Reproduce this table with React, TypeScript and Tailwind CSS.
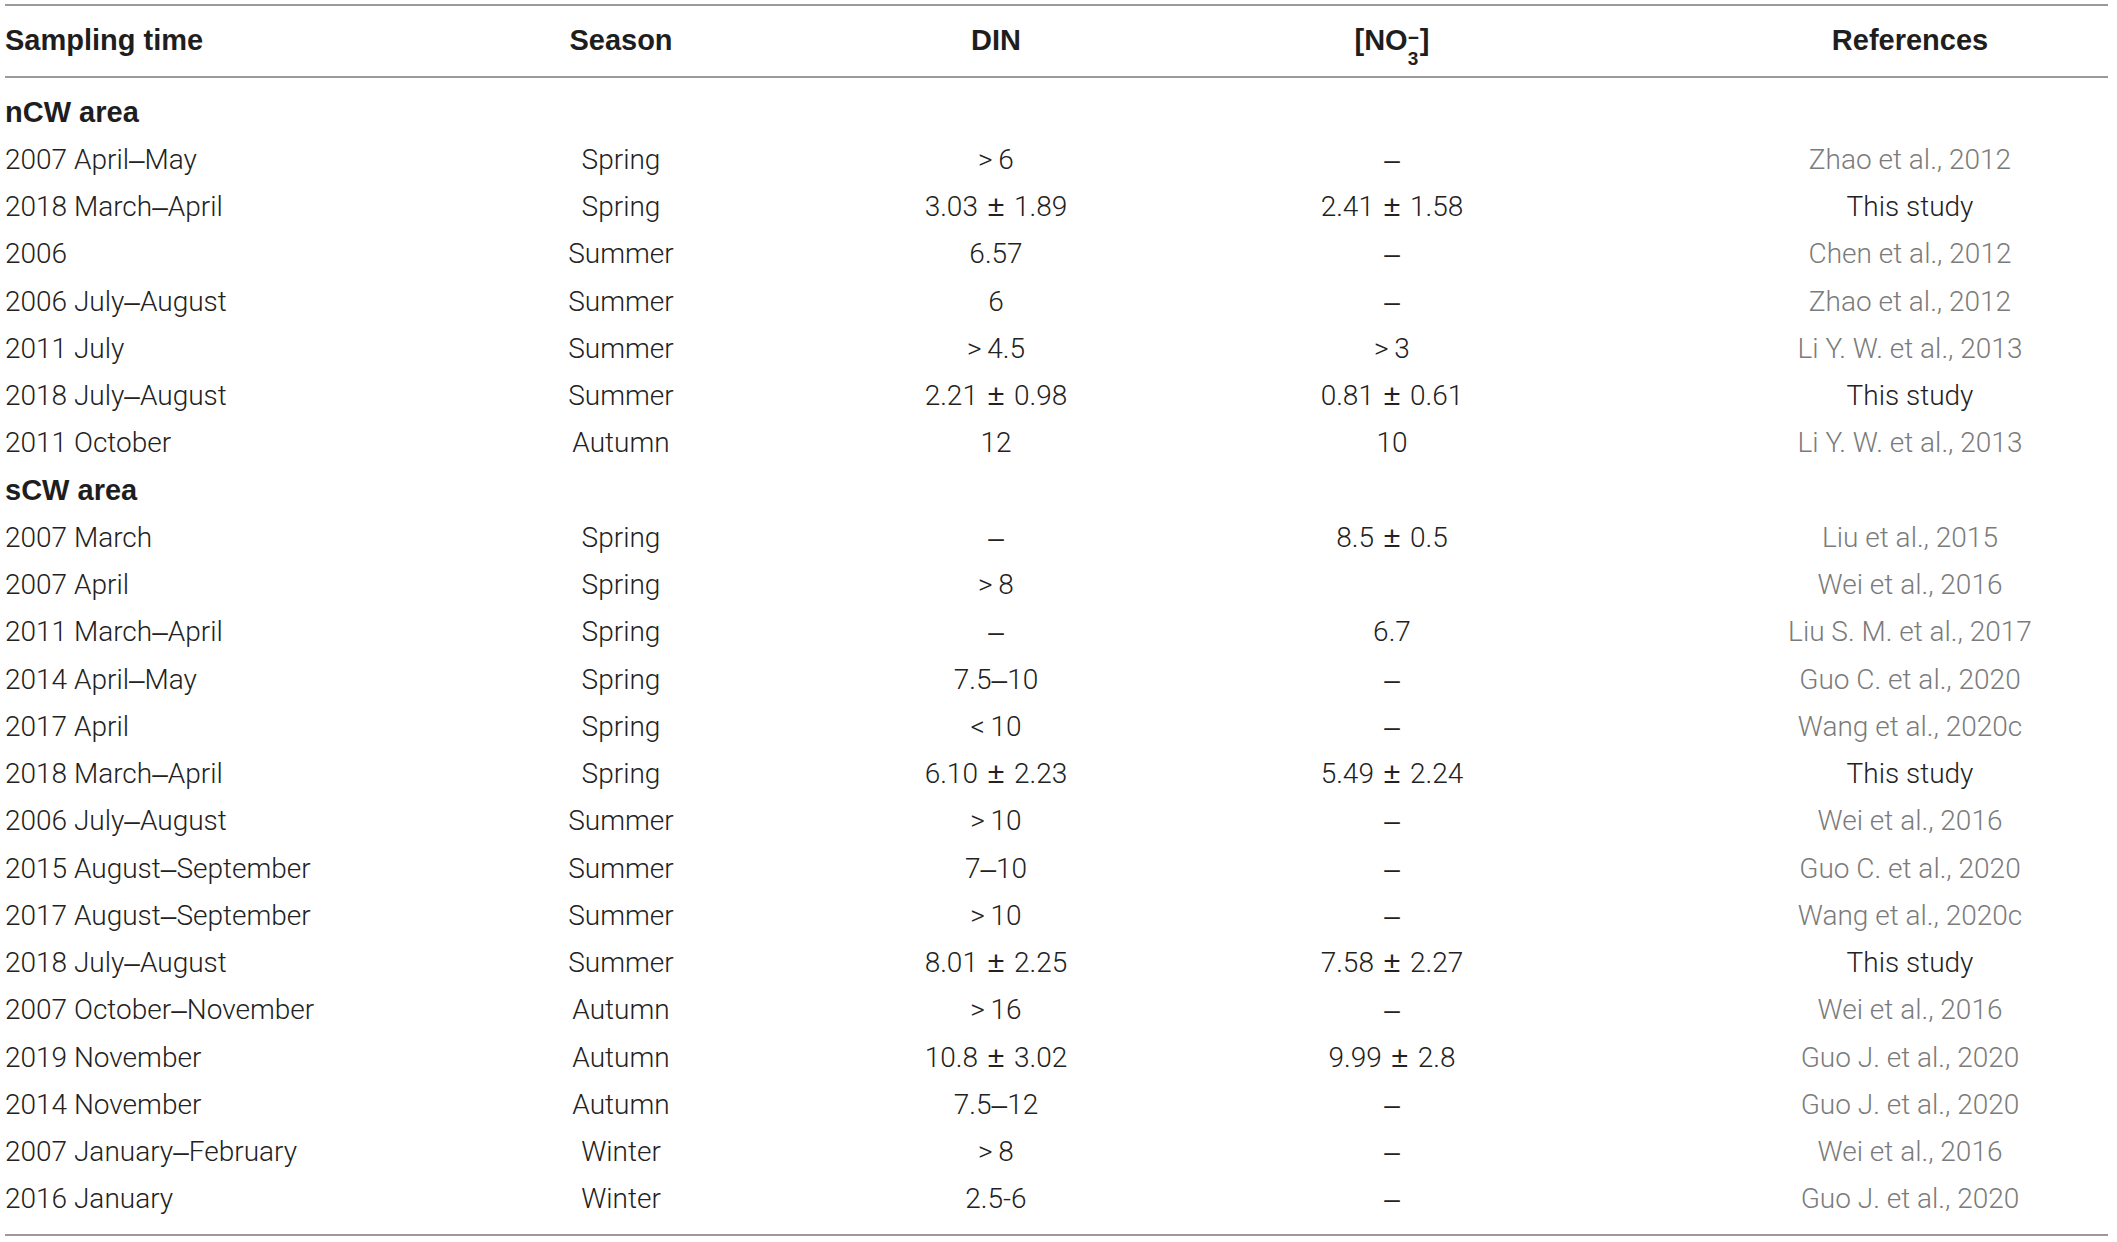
import React from 'react';

type Row = [string, string, string, string, string];

const nCW: Row[] = [
  ['2007 April–May', 'Spring', '>\u20096', '–', 'Zhao et al., 2012'],
  ['2018 March–April', 'Spring', '3.03 ± 1.89', '2.41 ± 1.58', 'This study'],
  ['2006', 'Summer', '6.57', '–', 'Chen et al., 2012'],
  ['2006 July–August', 'Summer', '6', '–', 'Zhao et al., 2012'],
  ['2011 July', 'Summer', '>\u20094.5', '>\u20093', 'Li Y. W. et al., 2013'],
  ['2018 July–August', 'Summer', '2.21 ± 0.98', '0.81 ± 0.61', 'This study'],
  ['2011 October', 'Autumn', '12', '10', 'Li Y. W. et al., 2013'],
];

const sCW: Row[] = [
  ['2007 March', 'Spring', '–', '8.5 ± 0.5', 'Liu et al., 2015'],
  ['2007 April', 'Spring', '>\u20098', '', 'Wei et al., 2016'],
  ['2011 March–April', 'Spring', '–', '6.7', 'Liu S. M. et al., 2017'],
  ['2014 April–May', 'Spring', '7.5–10', '–', 'Guo C. et al., 2020'],
  ['2017 April', 'Spring', '<\u200910', '–', 'Wang et al., 2020c'],
  ['2018 March–April', 'Spring', '6.10 ± 2.23', '5.49 ± 2.24', 'This study'],
  ['2006 July–August', 'Summer', '>\u200910', '–', 'Wei et al., 2016'],
  ['2015 August–September', 'Summer', '7–10', '–', 'Guo C. et al., 2020'],
  ['2017 August–September', 'Summer', '>\u200910', '–', 'Wang et al., 2020c'],
  ['2018 July–August', 'Summer', '8.01 ± 2.25', '7.58 ± 2.27', 'This study'],
  ['2007 October–November', 'Autumn', '>\u200916', '–', 'Wei et al., 2016'],
  ['2019 November', 'Autumn', '10.8 ± 3.02', '9.99 ± 2.8', 'Guo J. et al., 2020'],
  ['2014 November', 'Autumn', '7.5–12', '–', 'Guo J. et al., 2020'],
  ['2007 January–February', 'Winter', '>\u20098', '–', 'Wei et al., 2016'],
  ['2016 January', 'Winter', '2.5-6', '–', 'Guo J. et al., 2020'],
];

// ± and – look too light/loose in Roboto Light, so they get Liberation Sans
function Txt({ s }: { s: string }) {
  const parts = s.split(/([±–])/);
  return (
    <>
      {parts.map((p, i) =>
        p === '±' ? (
          <span key={i} className="font-['Liberation_Sans',sans-serif] font-normal text-[30px] leading-none mx-[3px]">±</span>
        ) : p === '–' ? (
          <span key={i} className="font-['Liberation_Sans',sans-serif] font-normal">–</span>
        ) : (
          <React.Fragment key={i}>{p}</React.Fragment>
        )
      )}
    </>
  );
}

function DataRow({ row }: { row: Row }) {
  const [time, season, din, no3, ref] = row;
  const isOwn = ref === 'This study';
  return (
    <div className="flex h-[47.26px] items-center text-[28px] leading-[34px] font-light text-[#222222]">
      <div className="w-[431px] whitespace-nowrap"><Txt s={time} /></div>
      <div className="w-[370px] text-center">{season}</div>
      <div className="w-[380px] text-center whitespace-nowrap"><Txt s={din} /></div>
      <div className="w-[412px] text-center whitespace-nowrap"><Txt s={no3} /></div>
      <div className="w-[114px]" />
      <div className={`w-[396px] text-center whitespace-nowrap ${isOwn ? 'text-[#222222]' : 'text-[#7b7b7b]'}`}>{ref}</div>
    </div>
  );
}

function Section({ title }: { title: string }) {
  return (
    <div className="flex h-[47.26px] items-center font-['Liberation_Sans',Arial,sans-serif] text-[29px] font-bold text-[#1e1e1e]">
      {title}
    </div>
  );
}

export default function App() {
  return (
    <div className="w-[2117px] h-[1242px] bg-white pl-[5px] pr-[9px] pt-[4px] font-['Roboto','Liberation_Sans',sans-serif]">
      <div className="border-t-2 border-b-2 border-[#9a9a9a]">
        <div className="flex h-[72px] items-center border-b-2 border-[#9a9a9a] font-['Liberation_Sans',Arial,sans-serif] text-[29px] font-bold text-[#1e1e1e]">
          <div className="w-[431px]">Sampling time</div>
          <div className="w-[370px] text-center">Season</div>
          <div className="w-[380px] text-center">DIN</div>
          <div className="w-[412px] text-center">
            <span className="inline-flex items-center">
              [NO
              <span className="inline-flex flex-col items-start text-[19px] leading-none mr-[1px]">
                <span className="-mb-[2px]">−</span>
                <span className="mt-[4px] -mb-[14px]">3</span>
              </span>
              ]
            </span>
          </div>
          <div className="w-[114px]" />
          <div className="w-[396px] text-center">References</div>
        </div>
        <div className="py-[11px]">
          <Section title="nCW area" />
          {nCW.map((r, i) => (
            <DataRow key={'n' + i} row={r} />
          ))}
          <Section title="sCW area" />
          {sCW.map((r, i) => (
            <DataRow key={'s' + i} row={r} />
          ))}
        </div>
      </div>
    </div>
  );
}
